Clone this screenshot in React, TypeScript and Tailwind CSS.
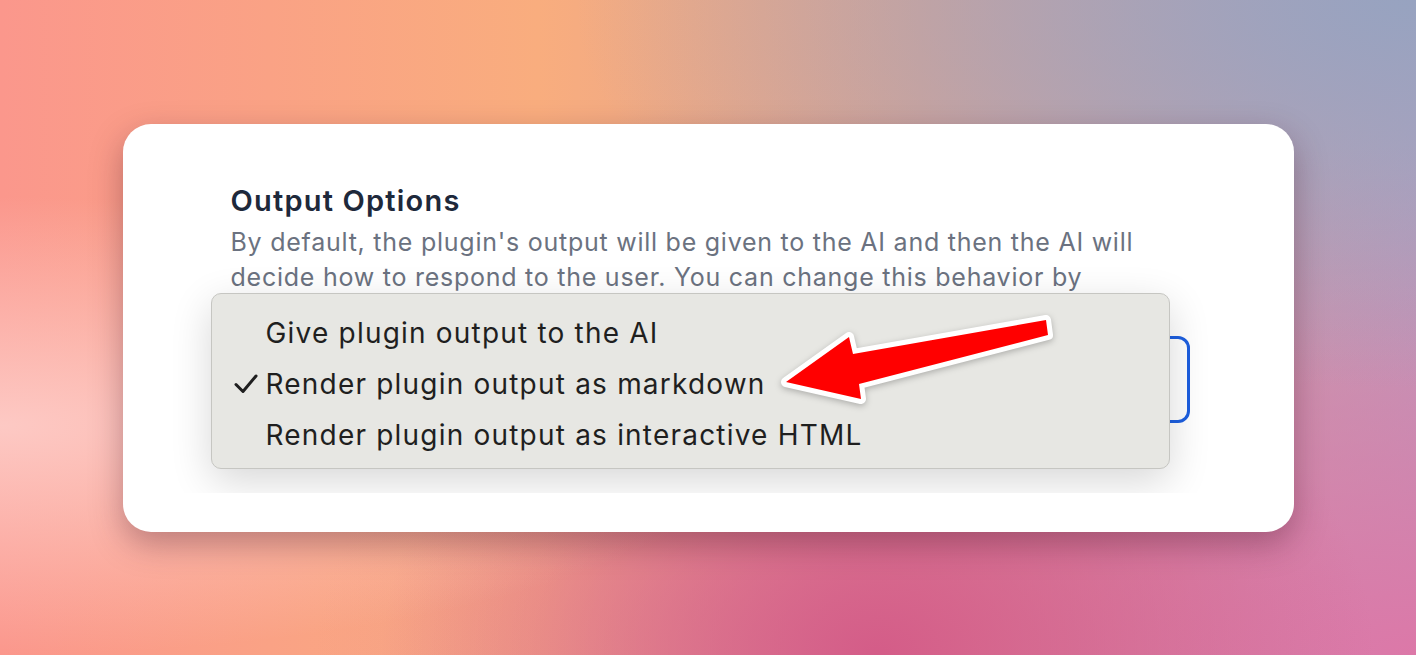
import React from "react";

const options = [
  { label: "Give plugin output to the AI", checked: false },
  { label: "Render plugin output as markdown", checked: true },
  { label: "Render plugin output as interactive HTML", checked: false },
];

function Arrow() {
  return (
    <svg
      className="absolute left-[560px] top-[10px] drop-shadow-[0_2px_3px_rgba(0,0,0,0.25)]"
      width="290"
      height="110"
      viewBox="0 0 290 110"
    >
      <polygon
        points="14,78 77,33 81,50 274,16 276,31 87,80 89,95"
        fill="#ff0000"
        stroke="#ffffff"
        strokeWidth="10"
        strokeLinejoin="round"
        paintOrder="stroke"
      />
    </svg>
  );
}

function Menu() {
  return (
    <div className="absolute left-[-20px] top-[-43px] w-[959px] h-[176px] rounded-[10px] border border-[#c6c6c2] bg-[#e7e7e3] pt-[14px] shadow-[0_12px_40px_rgba(0,0,0,0.16)]">
      {options.map((opt) => (
        <div key={opt.label} className="flex h-[51px] items-center">
          <div className="flex w-[54px] justify-end pr-[8px]">
            {opt.checked && (
              <svg width="24" height="22" viewBox="0 0 24 22">
                <path d="M2 11.5 L9 18.5 L22 3" fill="none" stroke="#1f1f1f" strokeWidth="3" strokeLinecap="round" strokeLinejoin="round" />
              </svg>
            )}
          </div>
          <span className="text-[28px] tracking-[1.2px] text-[#1f1f1f]">{opt.label}</span>
        </div>
      ))}
      <Arrow />
    </div>
  );
}

export default function App() {
  return (
    <div className="flex h-screen w-full items-center justify-center bg-[radial-gradient(ellipse_at_0%_65%,#fdc9c4_0%,transparent_38%),radial-gradient(ellipse_at_100%_0%,#97a3c0_0%,transparent_42%),radial-gradient(ellipse_at_62%_100%,#d45c88_0%,transparent_40%),radial-gradient(ellipse_at_100%_100%,#dc78a8_0%,transparent_55%),linear-gradient(to_right,#fb978c,#f9ad7e_38%,#dca392_65%,#b9a0bb)] font-['Inter','Noto_Sans',sans-serif]">
      <div className="flex h-[408px] w-[1171px] flex-col rounded-[28px] bg-white pb-[39px] pl-[48px] pr-[79px] shadow-[0_12px_32px_rgba(70,20,40,0.35)]">
        <div className="flex-1 overflow-hidden pl-[60px] pt-[60px]">
          <h2 className="text-[29px] font-semibold leading-[34px] tracking-[1.2px] text-[#1e293b]">Output Options</h2>
          <p className="mt-[7px] max-w-[912px] text-[25px] leading-[35px] tracking-[0.75px] text-[#6b7280]">
            By default, the plugin's output will be given to the AI and then the AI will decide how to respond to
            the user. You can change this behavior by selecting one of the options below.
          </p>
          <div className="relative mt-[6px] h-[87px] w-[959px]">
            <div className="h-full w-full rounded-[12px] border-[3px] border-[#1d5fe0] bg-white" />
            <Menu />
          </div>
        </div>
      </div>
    </div>
  );
}
